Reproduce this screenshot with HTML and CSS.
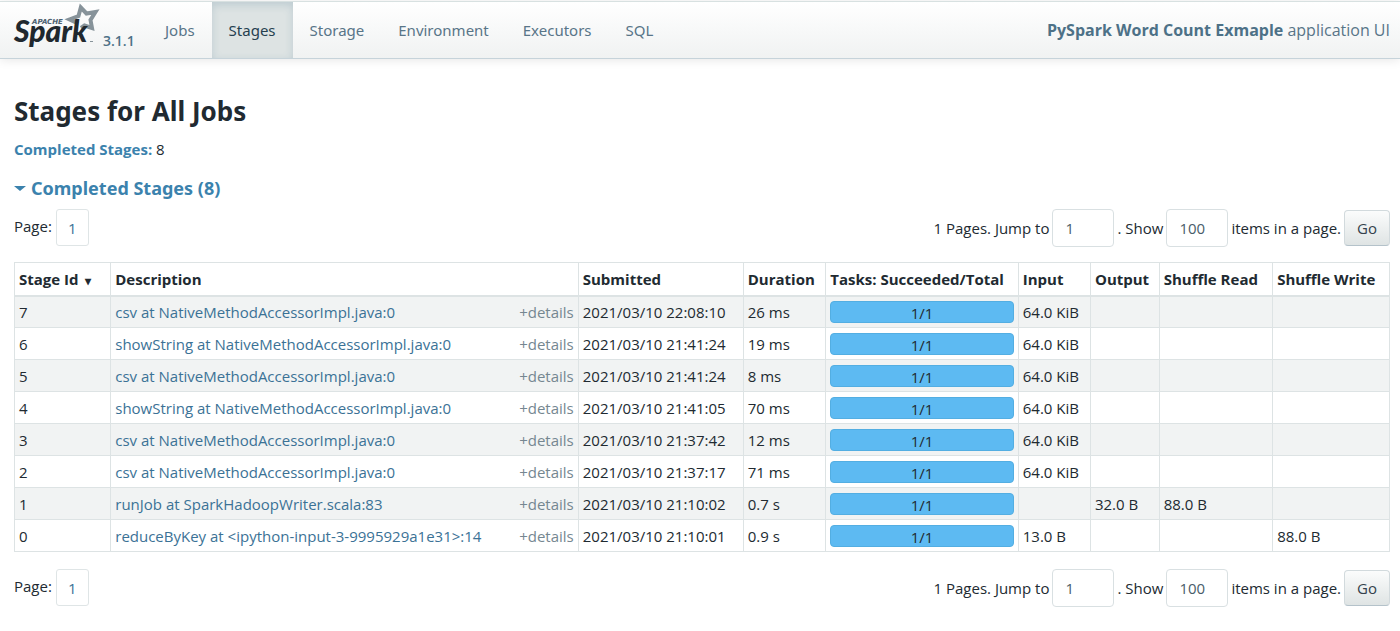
FILE: index.html
```html
<!DOCTYPE html>
<html lang="en">
<head>
<meta charset="utf-8">
<title>Stages for All Jobs</title>
<link rel="stylesheet" href="styles.css">
</head>
<body>
<header class="navbar">
  <a class="brand" href="#">
    <svg class="logo" viewBox="0 0 90 52" role="img" aria-label="Apache Spark">
      <path class="star" d="M68 21.500 L59.500 17.500 L68.500 14 L70.800 5.500 L76.500 11.500 L85.500 10 L80.500 18 L82 26 L74.500 23.500 L71 26" />
      <text class="logo-top" x="22" y="22">APACHE</text>
      <text class="logo-name" x="4" y="40">Spark</text>
      <path class="mark" d="M80 39.500h3" />
    </svg>
    <span class="version">3.1.1</span>
  </a>
  <nav class="tabs">
    <a href="#">Jobs</a>
    <a class="active" href="#">Stages</a>
    <a href="#">Storage</a>
    <a href="#">Environment</a>
    <a href="#">Executors</a>
    <a href="#">SQL</a>
  </nav>
  <p class="app"><strong>PySpark Word Count Exmaple</strong> application UI</p>
</header>
<main class="content">
  <h1>Stages for All Jobs</h1>
  <p class="summary"><a href="#completed">Completed Stages:</a> 8</p>
  <h2 id="completed"><a href="#completed"><span class="arrow"></span>Completed Stages (8)</a></h2>
  <div class="pager">
    <div class="pages"><span>Page:</span><a class="page" href="#">1</a></div>
    <form class="jump">
      <label for="page-top">1 Pages. Jump to</label><input id="page-top" type="text" value="1">
      <label for="size-top">. Show</label><input id="size-top" type="text" value="100">
      <span>items in a page.</span><button type="button">Go</button>
    </form>
  </div>
  <table class="stages">
    <colgroup><col class="c-id"><col class="c-desc"><col class="c-sub"><col class="c-dur"><col class="c-task"><col class="c-in"><col class="c-out"><col class="c-read"><col class="c-write"></colgroup>
    <thead>
      <tr><th>Stage Id <span class="sort">▾</span></th><th>Description</th><th>Submitted</th><th>Duration</th><th>Tasks: Succeeded/Total</th><th>Input</th><th>Output</th><th>Shuffle Read</th><th>Shuffle Write</th></tr>
    </thead>
    <tbody>
      <tr><td>7</td><td><div class="desc"><a href="#">csv at NativeMethodAccessorImpl.java:0</a><span>+details</span></div></td><td>2021/03/10 22:08:10</td><td>26 ms</td><td><div class="bar">1/1</div></td><td>64.0 KiB</td><td></td><td></td><td></td></tr>
      <tr><td>6</td><td><div class="desc"><a href="#">showString at NativeMethodAccessorImpl.java:0</a><span>+details</span></div></td><td>2021/03/10 21:41:24</td><td>19 ms</td><td><div class="bar">1/1</div></td><td>64.0 KiB</td><td></td><td></td><td></td></tr>
      <tr><td>5</td><td><div class="desc"><a href="#">csv at NativeMethodAccessorImpl.java:0</a><span>+details</span></div></td><td>2021/03/10 21:41:24</td><td>8 ms</td><td><div class="bar">1/1</div></td><td>64.0 KiB</td><td></td><td></td><td></td></tr>
      <tr><td>4</td><td><div class="desc"><a href="#">showString at NativeMethodAccessorImpl.java:0</a><span>+details</span></div></td><td>2021/03/10 21:41:05</td><td>70 ms</td><td><div class="bar">1/1</div></td><td>64.0 KiB</td><td></td><td></td><td></td></tr>
      <tr><td>3</td><td><div class="desc"><a href="#">csv at NativeMethodAccessorImpl.java:0</a><span>+details</span></div></td><td>2021/03/10 21:37:42</td><td>12 ms</td><td><div class="bar">1/1</div></td><td>64.0 KiB</td><td></td><td></td><td></td></tr>
      <tr><td>2</td><td><div class="desc"><a href="#">csv at NativeMethodAccessorImpl.java:0</a><span>+details</span></div></td><td>2021/03/10 21:37:17</td><td>71 ms</td><td><div class="bar">1/1</div></td><td>64.0 KiB</td><td></td><td></td><td></td></tr>
      <tr><td>1</td><td><div class="desc"><a href="#">runJob at SparkHadoopWriter.scala:83</a><span>+details</span></div></td><td>2021/03/10 21:10:02</td><td>0.7 s</td><td><div class="bar">1/1</div></td><td></td><td>32.0 B</td><td>88.0 B</td><td></td></tr>
      <tr><td>0</td><td><div class="desc"><a href="#">reduceByKey at &lt;ipython-input-3-9995929a1e31&gt;:14</a><span>+details</span></div></td><td>2021/03/10 21:10:01</td><td>0.9 s</td><td><div class="bar">1/1</div></td><td>13.0 B</td><td></td><td></td><td>88.0 B</td></tr>
    </tbody>
  </table>
  <div class="pager">
    <div class="pages"><span>Page:</span><a class="page" href="#">1</a></div>
    <form class="jump">
      <label for="page-end">1 Pages. Jump to</label><input id="page-end" type="text" value="1">
      <label for="size-end">. Show</label><input id="size-end" type="text" value="100">
      <span>items in a page.</span><button type="button">Go</button>
    </form>
  </div>
</main>
</body>
</html>
```

FILE: styles.css
```css
* { box-sizing: border-box; }
body {
  margin: 0;
  background: #fff;
  color: #212a31;
  font: 15px/20px "Open Sans", "Noto Sans", sans-serif;
}
a { color: #3b7296; text-decoration: none; }
h1, h2, p { margin: 0; }
h1, h2 { font-family: "Noto Sans", "Open Sans", sans-serif; }

.navbar {
  display: flex;
  align-items: stretch;
  height: 58px;
  margin-top: 1px;
  padding: 0 10px;
  border-top: 1px solid #d8e1e1;
  border-bottom: 1px solid #c6d3da;
  background: linear-gradient(#fff, #f0f2f2);
  box-shadow: 0 1px 10px rgba(0, 0, 0, 0.1);
}
.brand { display: flex; align-items: flex-end; gap: 3px; width: 138px; }
.logo { width: 90px; height: 52px; align-self: flex-start; }
.star { fill: none; stroke: #87939a; stroke-width: 4; }
.mark { fill: none; stroke: #87939a; stroke-width: 1; }
.logo-top { font: italic bold 7px "DejaVu Sans", sans-serif; fill: #4c6170; }
.logo-name { font: italic 900 30px Lato, sans-serif; fill: #20282e; }
.version { color: #4d7187; font-weight: 600; font-size: 14px; padding-bottom: 7px; }
.tabs { display: flex; font-family: "Noto Sans", "Open Sans", sans-serif; }
.tabs a { display: flex; align-items: center; padding: 0 17px; color: #587588; }
.tabs .active { background: #dde3e3; color: #25404f; box-shadow: inset 0 3px 8px rgba(60, 110, 140, 0.2); }
.app { margin-left: auto; align-self: center; color: #587588; font-size: 16px; }
.app strong { color: #4d7187; }

.content { padding: 33px 10px 24px 14px; }
h1 { font-size: 26px; line-height: 38px; }
.summary { margin-top: 9px; }
.summary a { font-weight: 700; color: #3b82ad; }
h2 { margin-top: 16px; font-size: 18px; line-height: 26px; }
h2 a { display: flex; align-items: center; gap: 5px; color: #3b82ad; }
.arrow { border: 6px solid transparent; border-top: 5px solid #3b82ad; border-bottom: 0; }

.pager { display: flex; justify-content: space-between; margin: 8px 0 15px; }
.pages { display: flex; gap: 4px; line-height: 35px; }
.page {
  width: 33px;
  height: 37px;
  border: 1px solid #dfe5e6;
  border-radius: 3px;
  line-height: 37px;
  text-align: center;
}
.jump { display: flex; align-items: center; gap: 3px; }
.jump input {
  width: 62px;
  height: 38px;
  padding: 0 12px;
  border: 1px solid #d9e0e2;
  border-radius: 4px;
  color: #495d69;
  font: inherit;
}
.jump button {
  width: 46px;
  height: 36px;
  padding: 0;
  border: 1px solid #d2dadd;
  border-bottom-color: #b4c2ca;
  border-radius: 4px;
  background: linear-gradient(#fbfcfc, #dfe4e4);
  color: #34424c;
  font: inherit;
}

.stages { width: 100%; margin-bottom: 17px; table-layout: fixed; border-collapse: collapse; }
.c-id { width: 7%; }
.c-desc { width: 34%; }
.c-sub { width: 12%; }
.c-dur { width: 6%; }
.c-task { width: 14%; }
.c-in { width: 5.25%; }
.c-out { width: 5%; }
.c-read { width: 8.25%; }
.c-write { width: 8.5%; }
.stages th, .stages td { padding: 0 4px; border: 1px solid #dde3e4; text-align: left; white-space: nowrap; }
.stages th { height: 33px; border-bottom-width: 2px; }
.stages td { height: 32px; }
.stages tbody tr:nth-child(odd) { background: #f1f3f3; }
.sort { margin-left: 3px; font-size: 12px; line-height: 12px; }
.desc { display: flex; justify-content: space-between; }
.desc span { color: #758791; }
.bar {
  height: 22px;
  border: 1px solid #53aee2;
  border-radius: 4px;
  background: #5dbaf2;
  line-height: 22px;
  text-align: center;
}
```
